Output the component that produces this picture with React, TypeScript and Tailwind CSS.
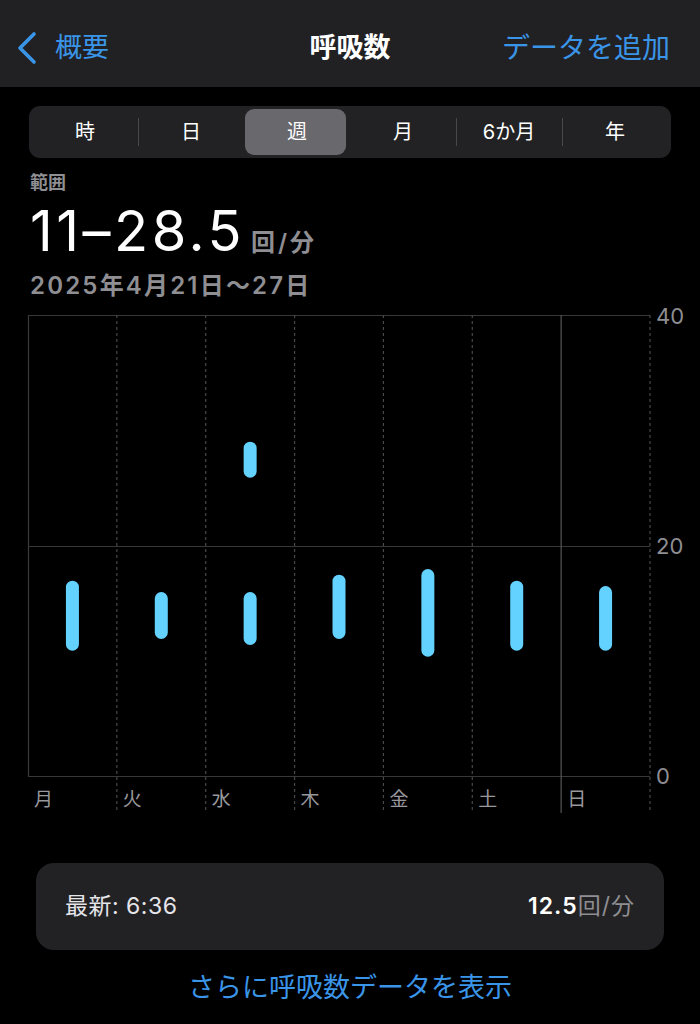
import React from "react";

const segments = ["時", "日", "週", "月", "6か月", "年"];
const days = ["月", "火", "水", "木", "金", "土", "日"];

const colW = (650 - 28) / 7;
const bars: { i: number; top: number; bottom: number }[] = [
  { i: 0, top: 280.7, bottom: 350.7 },
  { i: 1, top: 292, bottom: 339 },
  { i: 2, top: 141.7, bottom: 177.7 },
  { i: 2, top: 292, bottom: 345 },
  { i: 3, top: 274.7, bottom: 339 },
  { i: 4, top: 269, bottom: 356.7 },
  { i: 5, top: 280.7, bottom: 350.7 },
  { i: 6, top: 286, bottom: 350.7 },
];

function Chart() {
  const vlines = [1, 2, 3, 4, 5, 6, 7].map((k) => 28 + colW * k);
  return (
    <div className="relative h-[520px] w-[700px]">
      <svg
        width="700"
        height="520"
        viewBox="0 0 700 520"
        className="absolute left-0 top-0"
      >
        {[15.5, 246.5, 476.5].map((y) => (
          <line key={y} x1={28} x2={650} y1={y} y2={y} stroke="#38383a" strokeWidth={1.2} />
        ))}
        <line x1={28.5} x2={28.5} y1={15} y2={476} stroke="#3a3a3c" strokeWidth={1.2} />
        {vlines.map((x, k) =>
          k === 5 ? (
            <line key={k} x1={x} x2={x} y1={15} y2={513} stroke="#555558" strokeWidth={1.2} />
          ) : (
            <line
              key={k}
              x1={x}
              x2={x}
              y1={15}
              y2={513}
              stroke="#48484b"
              strokeWidth={1.2}
              strokeDasharray="3 3"
            />
          )
        )}
        {bars.map((b, k) => {
          const cx = 28 + colW * (b.i + 0.5);
          return (
            <rect
              key={k}
              x={cx - 6.5}
              y={b.top}
              width={13}
              height={b.bottom - b.top}
              rx={6.5}
              fill="#64d2ff"
            />
          );
        })}
      </svg>
      <span className="absolute left-[656px] top-[1px] text-[22px] leading-[30px] text-[#8e8e93]">40</span>
      <span className="absolute left-[656px] top-[231px] text-[22px] leading-[30px] text-[#8e8e93]">20</span>
      <span className="absolute left-[656px] top-[461px] text-[22px] leading-[30px] text-[#8e8e93]">0</span>
      {days.map((d, i) => (
        <span
          key={d}
          className="absolute top-[486px] text-[19px] leading-[28px] text-[#98989d]"
          style={{ left: 28 + colW * i + 6 }}
        >
          {d}
        </span>
      ))}
    </div>
  );
}

export default function App() {
  return (
    <div className="min-h-[1024px] w-[700px] bg-black font-['Inter','Noto_Sans_CJK_JP',sans-serif] text-white">
      {/* Header */}
      <div className="relative flex h-[87px] items-center justify-between bg-[#212123] pl-[15px] pr-[30px] pt-[8px]">
        <div className="flex items-center gap-[16px] text-[#3a95e8]">
          <svg width="24" height="34" viewBox="0 0 24 34" fill="none">
            <path d="M19 3 L5 17 L19 31" stroke="#3a95e8" strokeWidth="3.6" strokeLinecap="round" strokeLinejoin="round" />
          </svg>
          <span className="text-[27px] leading-none">概要</span>
        </div>
        <span className="absolute left-1/2 -translate-x-1/2 text-[27px] font-bold leading-none">呼吸数</span>
        <span className="text-[28px] leading-none text-[#3a95e8]">データを追加</span>
      </div>

      {/* Segmented control */}
      <div className="mx-[29px] mt-[19px] grid h-[52px] grid-cols-6 rounded-[11px] bg-[#222224] p-[3px]">
        {segments.map((s, i) => {
          const selected = i === 2;
          const showSep = i > 0 && i !== 2 && i !== 3;
          return (
            <div key={s} className="relative flex items-center justify-center">
              {showSep && (
                <div className="absolute left-0 top-[9px] h-[28px] w-px bg-[#48484a]" />
              )}
              {selected && (
                <div className="absolute inset-y-0 left-[1px] right-[4px] rounded-[9px] bg-[#68686d]" />
              )}
              <span className="relative text-[20px] font-normal text-white">{s}</span>
            </div>
          );
        })}
      </div>

      {/* Summary */}
      <div className="pl-[30px] pt-[12px]">
        <div className="text-[18px] font-semibold leading-[26px] text-[#8e8e93]">範囲</div>
        <div className="mt-[5px] flex items-baseline">
          <span className="text-[56px] font-normal leading-[60px] tracking-[3.5px]">11–28.5</span>
          <span className="ml-[6px] text-[24px] font-semibold tracking-[3px] text-[#8e8e93]">回/分</span>
        </div>
        <div className="mt-[9px] text-[24px] font-semibold leading-[32px] tracking-[2.2px] text-[#8e8e93]">
          2025年4月21日～27日
        </div>
      </div>

      {/* Chart */}
      <div className="-mt-[2px]">
        <Chart />
      </div>

      {/* Latest card */}
      <div className="mx-[36px] mt-[43px] flex h-[87px] items-center justify-between rounded-[18px] bg-[#222224] pl-[29px] pr-[29px]">
        <span className="text-[23px] tracking-[0.5px] text-[#e5e5ea]">最新: 6:36</span>
        <span className="text-[23px] tracking-[1px]">
          <span className="font-semibold text-white">12.5</span>
          <span className="text-[#8e8e93]">回/分</span>
        </span>
      </div>

      <div className="mt-[18px] text-center text-[27px] text-[#3a95e8]">さらに呼吸数データを表示</div>
    </div>
  );
}
